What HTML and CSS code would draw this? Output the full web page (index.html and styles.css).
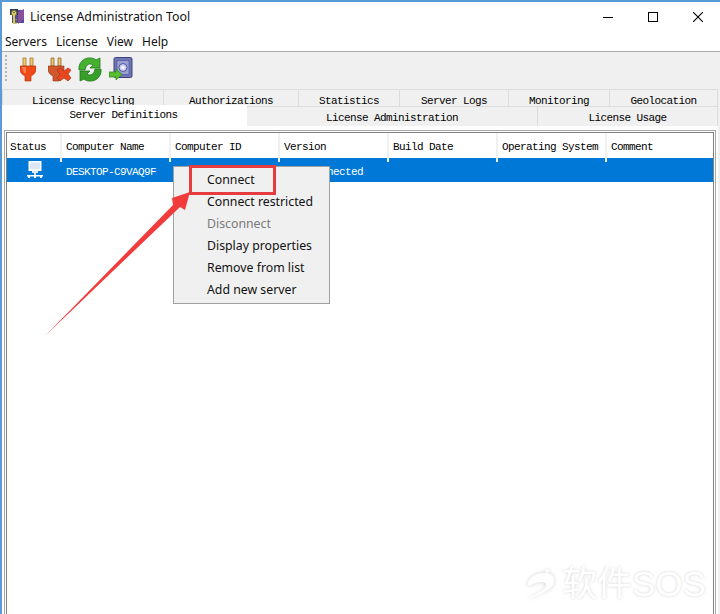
FILE: index.html
```html
<!DOCTYPE html>
<html lang="en">
<head>
<meta charset="utf-8">
<title>License Administration Tool</title>
<link rel="stylesheet" href="styles.css">
</head>
<body>
<div class="window">
  <header class="titlebar">
    <svg class="app-icon" width="16" height="18" viewBox="0 0 16 18">
      <rect x="3" y="2" width="12" height="13" fill="#4c4c98"/>
      <path d="M9 4l6-3v10l-6 5z" fill="#8a4f9a"/>
      <path d="M1 1h8v6H1z" fill="#2e3a60"/>
      <circle cx="5" cy="5" r="2.600" fill="#e8dc6a" stroke="#7c7428"/>
      <circle cx="5" cy="4.500" r=".8" fill="#2e3a60"/>
      <path d="M4 7h2v9H4z" fill="#d8c850"/>
      <path d="M6 11h2v1.500H6zM6 14h2v1.500H6z" fill="#8c8430"/>
    </svg>
    <span class="title-text">License Administration Tool</span>
    <div class="win-controls">
      <svg width="10" height="10" viewBox="0 0 10 10"><path d="M0 5.500h10" stroke="#000"/></svg>
      <svg width="10" height="10" viewBox="0 0 10 10"><rect x=".5" y=".5" width="9" height="9" fill="none" stroke="#000"/></svg>
      <svg width="10" height="10" viewBox="0 0 10 10"><path d="M0 0l10 10M10 0L0 10" stroke="#000" stroke-width="1.100"/></svg>
    </div>
  </header>
  <nav class="menubar">
    <span>Servers</span><span>License</span><span>View</span><span>Help</span>
  </nav>
  <div class="toolbar">
    <div class="grip"></div>
    <svg class="tool tool-plug" width="16" height="25" viewBox="0 0 16 25">
      <path d="M3 1h3v8H3zM10 1h3v8h-3z" fill="#f2ca6a" stroke="#a07830" stroke-width=".8"/>
      <path d="M0 9h16v3c0 4-3 6-5 7v5H5v-5c-2-1-5-3-5-7z" fill="#f04a18" stroke="#b02808" stroke-width=".6"/>
      <path d="M2 10h4v6H4z" fill="#f78050"/>
    </svg>
    <svg class="tool tool-unplug" width="24" height="25" viewBox="0 0 24 25">
      <path d="M3 1h3v8H3zM10 1h3v8h-3z" fill="#e8c070" stroke="#906830" stroke-width=".8"/>
      <path d="M0 9h16v3c0 4-3 6-5 7v5H5v-5c-2-1-5-3-5-7z" fill="#d0582c" stroke="#903010" stroke-width=".6"/>
      <path d="M9 13l3-2 4 3 4-3 3 2-3 4 3 4-3 3-4-3-4 3-3-3 3-4z" fill="#e8481f" stroke="#a83418" stroke-width=".7"/>
    </svg>
    <svg class="tool tool-refresh" width="24" height="25" viewBox="0 0 24 25">
      <path d="M1 13C0 6 6 0 13 1c2 0 4 1 5 2l4-2v10h-10l3-3c-3-2-7-1-8 5z" fill="#48b030" stroke="#1c7818" stroke-width=".8"/>
      <path d="M23 12c1 7-5 13-12 12-2 0-4-1-5-2l-4 2V14h10l-3 3c3 2 7 1 8-5z" fill="#38a028" stroke="#1c7818" stroke-width=".8"/>
    </svg>
    <svg class="tool tool-safe" width="24" height="24" viewBox="0 0 24 24">
      <rect x="5" y="0.500" width="18" height="20" rx="1.500" fill="#6e76b4" stroke="#3c4078"/>
      <rect x="8" y="3.500" width="12" height="14" fill="#9aa0d4" stroke="#50569a" stroke-width=".7"/>
      <circle cx="14" cy="10.500" r="4" fill="#cdd0ee" stroke="#50569a"/>
      <circle cx="14" cy="10.500" r="1.500" fill="#fff"/>
      <path d="M0 15h7v-3l6 5.500L7 23v-3H0z" fill="#58c030" stroke="#2a8018" stroke-width=".7"/>
    </svg>
  </div>
  <div class="tabs">
    <div class="tab-row tab-row-back">
      <div class="tab w161">License Recycling</div>
      <div class="tab w135">Authorizations</div>
      <div class="tab w101">Statistics</div>
      <div class="tab w109">Server Logs</div>
      <div class="tab w101">Monitoring</div>
      <div class="tab w108">Geolocation</div>
    </div>
    <div class="tab-row tab-row-front">
      <div class="tab tab-active w244">Server Definitions</div>
      <div class="tab w291">License Administration</div>
      <div class="tab w180">License Usage</div>
    </div>
  </div>
  <main class="panel">
    <div class="table-frame">
      <div class="table">
        <div class="thead">
          <div>Status</div><div>Computer Name</div><div>Computer ID</div><div>Version</div><div>Build Date</div><div>Operating System</div><div>Comment</div>
        </div>
        <div class="trow">
          <div class="cell-icon">
            <svg width="16" height="17" viewBox="0 0 16 17">
              <path d="M1.500 0h13v10h-13z" fill="#fff"/>
              <path d="M3 1.500h10v6.500H3z" fill="#dce6f4"/>
              <path d="M5 10h6v2H5zM7 12h2v2H7z" fill="#dfe8f4"/>
              <path d="M0 14h16v1.500H0zM1 15h2v2H1zM7 15h2v2H7zM13 15h2v2h-2z" fill="#fff"/>
            </svg>
          </div>
          <div class="cell-name">DESKTOP-C9VAQ9F</div>
          <div></div>
          <div class="cell-state">Disconnected</div>
          <div></div><div></div><div></div>
        </div>
      </div>
    </div>
  </main>
</div>

<div class="context-menu">
  <div>Connect</div>
  <div>Connect restricted</div>
  <div class="disabled">Disconnect</div>
  <div>Display properties</div>
  <div>Remove from list</div>
  <div>Add new server</div>
</div>
<div class="highlight"></div>
<svg class="arrow" width="160" height="150" viewBox="40 190 160 150">
  <path d="M45 336L173 205l-1-7 18-6-5 18-5-3z" fill="#f23c3c"/>
</svg>
<div class="watermark">
  <svg width="34" height="36" viewBox="0 0 34 36">
    <path d="M20 3l5 2-3 2c5 1 8 4 7 9-1 6-8 9-14 12-4 2-9 4-13 5 6-3 15-7 18-11 2-3 1-6-3-6-4 0-7 1-11 3C3 21 1 17 5 13 9 8 15 7 21 7z" fill="#fff" class="wm-shape"/>
  </svg>
  <span>软件SOS</span>
</div>
</body>
</html>
```
FILE: styles.css
```css
html, body {
  margin: 0;
  padding: 0;
  background: #fff;
}
body {
  position: relative;
  width: 720px;
  height: 614px;
  overflow: hidden;
}
.window {
  display: flex;
  flex-direction: column;
  box-sizing: border-box;
  width: 720px;
  height: 614px;
  border-top: 2px solid #5b9bd5;
  border-left: 2px solid #5b9bd5;
  background: #f0f0f0;
  overflow: hidden;
  font-family: "Noto Sans", sans-serif;
  color: #111;
}
.titlebar {
  display: flex;
  align-items: center;
  height: 30px;
  padding-left: 7px;
  padding-bottom: 1px;
  background: #fff;
}
.app-icon {
  margin-right: 5px;
}
.title-text {
  font-size: 12.400px;
  margin-top: -2px;
}
.win-controls {
  display: flex;
  gap: 35px;
  margin-left: auto;
  margin-right: 17px;
}
.menubar {
  display: flex;
  gap: 9px;
  align-items: center;
  height: 16px;
  padding-left: 3px;
  padding-bottom: 2px;
  background: #fff;
  border-bottom: 1px solid #a8a8a8;
  font-size: 12px;
}
.toolbar {
  display: flex;
  align-items: center;
  height: 34px;
  padding-bottom: 2px;
  background: #f0f0f0;
}
.grip {
  width: 2px;
  height: 28px;
  margin-left: 3px;
  background: repeating-linear-gradient(#b4b4b4 0 2px, transparent 2px 4px);
}
.tool-plug { margin-left: 13px; }
.tool-unplug { margin-left: 12px; }
.tool-refresh { margin-left: 6px; }
.tool-safe { margin-left: 7px; }
.tabs {
  position: relative;
  margin-top: 1px;
  font-family: "Liberation Mono", monospace;
  font-size: 11px;
  letter-spacing: -0.600px;
  color: #000;
}
.tab-row {
  display: flex;
}
.tab {
  box-sizing: border-box;
  flex: none;
  text-align: center;
  overflow: hidden;
  background: #f0f0f0;
  border: 1px solid #dcdcdc;
  border-bottom: 0;
  margin-right: -1px;
}
.tab-row-back .tab {
  height: 17px;
  line-height: 22px;
}
.tab-row-front .tab {
  height: 20px;
  line-height: 22px;
}
.tab-active {
  position: relative;
  margin-top: -1px;
  padding-right: 2px;
  background: #fff;
  border: 0;
  line-height: 21px !important;
  height: 21px !important;
}
.w161 { width: 162px; }
.w135 { width: 136px; }
.w101 { width: 102px; }
.w109 { width: 110px; }
.w108 { width: 109px; }
.w244 { width: 245px; }
.w291 { width: 292px; }
.w180 { width: 181px; }
.panel {
  flex: 1;
  width: 716px;
  padding: 4px 2px 0 2px;
  box-sizing: border-box;
  background: #fff;
  min-height: 0;
}
.table-frame {
  box-sizing: border-box;
  width: 712px;
  height: 100%;
  border: 1px solid #a8a8a8;
  border-bottom: 0;
  padding: 1px 1px 0;
}
.table {
  box-sizing: border-box;
  height: 100%;
  border: 1px solid #808080;
  border-bottom: 0;
  font-family: "Liberation Mono", monospace;
  font-size: 11px;
  letter-spacing: -0.600px;
  background: #fff;
}
.thead,
.trow {
  display: grid;
  grid-template-columns: 54px 109px 109px 109px 109px 109px 1fr;
}
.thead {
  height: 25px;
  line-height: 29px;
}
.thead > div {
  padding-left: 5px;
  border-right: 2px solid #f0f0f0;
  margin-right: -1px;
  color: #000;
}
.thead > div:first-child {
  padding-left: 3px;
}
.thead > div:last-child {
  border-right: 0;
}
.trow {
  height: 24px;
  line-height: 29px;
  background: #0078d7;
  color: #fff;
}
.cell-icon {
  display: flex;
  justify-content: center;
  padding-top: 3px;
  padding-left: 2px;
}
.cell-name {
  padding-left: 5px;
  white-space: nowrap;
}
.cell-state {
  padding-left: 12px;
  white-space: nowrap;
}
.context-menu {
  position: absolute;
  left: 173px;
  top: 166px;
  box-sizing: border-box;
  width: 157px;
  height: 138px;
  padding: 3px 0;
  background: #f0f0f0;
  border: 1px solid #a0a0a0;
  font-family: "Noto Sans", sans-serif;
  font-size: 12.300px;
  color: #111;
}
.context-menu > div {
  height: 22px;
  line-height: 19px;
  padding-left: 33px;
}
.context-menu .disabled {
  color: #7a7a7a;
}
.highlight {
  position: absolute;
  left: 189px;
  top: 165px;
  box-sizing: border-box;
  width: 87px;
  height: 30px;
  border: 3px solid #e63b3f;
}
.arrow {
  position: absolute;
  left: 40px;
  top: 190px;
}
.watermark {
  position: absolute;
  left: 525px;
  top: 562px;
  display: flex;
  align-items: center;
  gap: 3px;
  font-family: "Liberation Sans", "Noto Sans CJK SC", sans-serif;
  font-size: 35px;
  line-height: 44px;
  color: #fff;
  text-shadow: 0 0 3px rgba(0, 0, 0, .18);
  white-space: nowrap;
}
.wm-shape {
  filter: drop-shadow(0 0 2px rgba(0, 0, 0, .18));
}
```
